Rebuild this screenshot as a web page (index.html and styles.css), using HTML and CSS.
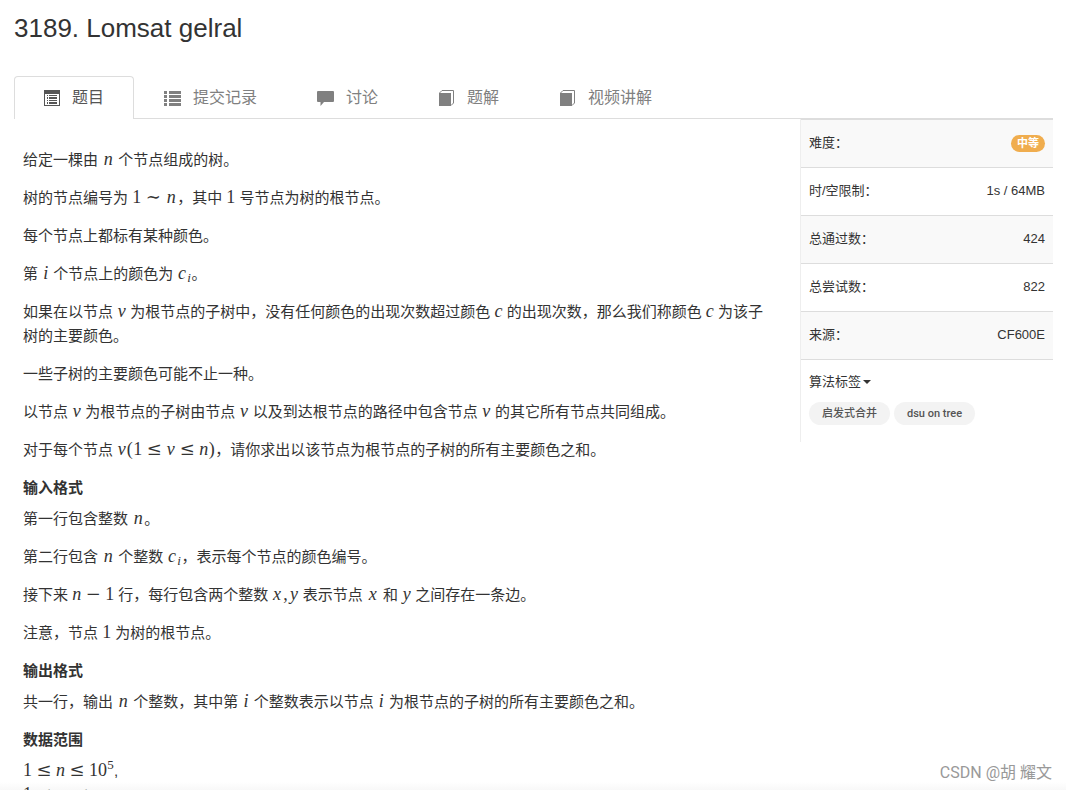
FILE: index.html
```html
<!DOCTYPE html>
<html lang="zh-CN">
<head>
<meta charset="utf-8">
<title>3189. Lomsat gelral</title>
<link rel="stylesheet" href="styles.css">
</head>
<body>
<div class="page">
  <h1 class="title">3189. Lomsat gelral</h1>
  <nav class="tabs">
    <a class="tab active" href="#"><svg class="icon" viewBox="0 0 16 17"><path fill-rule="evenodd" d="M0 1h16v16H0zM1 5h14v11H1z"/><path d="M3 6h1v1H3zM5 6h8v1H5zM3 8h1v2H3zM5 8h8v2H5zM3 11h1v1H3zM5 11h8v1H5zM3 13h1v2H3zM5 13h8v2H5z"/></svg>题目</a>
    <a class="tab" href="#"><svg class="icon" viewBox="0 0 17 17"><path d="M0 2h3v3H0zM5 2h12v3H5zM0 6h3v3H0zM5 6h12v3H5zM0 10h3v3H0zM5 10h12v3H5zM0 14h3v3H0zM5 14h12v3H5z"/></svg>提交记录</a>
    <a class="tab" href="#"><svg class="icon" viewBox="0 0 17 17"><path d="M1 2h15Q17 2 17 3v9Q17 13 16 13H7L3.500 17v-4H1Q0 13 0 12V3Q0 2 1 2z"/></svg>讨论</a>
    <a class="tab" href="#"><svg class="icon" viewBox="0 0 17 17"><path d="M1 4h12v13H1z"/><path d="M1.500 4L4 1.500h11.500V14l-2.500 2.500" fill="none" stroke="currentColor"/></svg>题解</a>
    <a class="tab" href="#"><svg class="icon" viewBox="0 0 17 17"><path d="M1 4h12v13H1z"/><path d="M1.500 4L4 1.500h11.500V14l-2.500 2.500" fill="none" stroke="currentColor"/></svg>视频讲解</a>
  </nav>
  <div class="columns">
    <main class="problem">
      <p>给定一棵由 <i class="w12">n</i> 个节点组成的树。</p>
      <p>树的节点编号为 <b class="w9">1</b><b class="rel">∼</b><i class="w12">n</i>，其中 <b class="w9">1</b> 号节点为树的根节点。</p>
      <p>每个节点上都标有某种颜色。</p>
      <p>第 <i class="w7">i</i> 个节点上的颜色为 <i class="w9">c</i><i class="sub">i</i>。</p>
      <p>如果在以节点 <i class="w9">v</i> 为根节点的子树中，没有任何颜色的出现次数超过颜色 <i class="w8">c</i> 的出现次数，那么我们称颜色 <i class="w8">c</i> 为该子树的主要颜色。</p>
      <p>一些子树的主要颜色可能不止一种。</p>
      <p>以节点 <i class="w9">v</i> 为根节点的子树由节点 <i class="w9">v</i> 以及到达根节点的路径中包含节点 <i class="w9">v</i> 的其它所有节点共同组成。</p>
      <p>对于每个节点 <i class="w9">v</i><b class="w7">(</b><b class="w9">1</b><b class="rel">≤</b><i class="w9">v</i><b class="rel">≤</b><i class="w9">n</i><b class="w7">)</b>，请你求出以该节点为根节点的子树的所有主要颜色之和。</p>
      <h4>输入格式</h4>
      <p>第一行包含整数 <i class="w12">n</i>。</p>
      <p>第二行包含 <i class="w12">n</i> 个整数 <i class="w9">c</i><i class="sub">i</i>，表示每个节点的颜色编号。</p>
      <p>接下来 <i class="w9">n</i><b class="rel">−</b><b class="w9">1</b> 行，每行包含两个整数 <i class="w9">x</i><b class="w8">,</b><i class="w9">y</i> 表示节点 <i class="w12">x</i> 和 <i class="w9">y</i> 之间存在一条边。</p>
      <p>注意，节点 <b class="w9">1</b> 为树的根节点。</p>
      <h4>输出格式</h4>
      <p>共一行，输出 <i class="w12">n</i> 个整数，其中第 <i class="w7">i</i> 个整数表示以节点 <i class="w7">i</i> 为根节点的子树的所有主要颜色之和。</p>
      <h4>数据范围</h4>
      <p><b class="w9">1</b><b class="rel">≤</b><i class="w9">n</i><b class="rel">≤</b><b class="w9">1</b><b class="w9">0</b><b class="sup">5</b>,<br><b class="w9">1</b><b class="rel">≤</b><i class="w8">c</i><i class="sub">i</i><b class="rel">≤</b><i class="w9">n</i></p>
    </main>
    <aside class="info">
      <table class="facts">
        <tr><th scope="row">难度：</th><td><span class="badge">中等</span></td></tr>
        <tr><th scope="row">时/空限制：</th><td>1s / 64MB</td></tr>
        <tr><th scope="row">总通过数：</th><td>424</td></tr>
        <tr><th scope="row">总尝试数：</th><td>822</td></tr>
        <tr><th scope="row">来源：</th><td>CF600E</td></tr>
      </table>
      <div class="labels">
        <button class="toggle" type="button">算法标签<span class="caret"></span></button>
        <div class="tags"><a class="tag" href="#">启发式合并</a><a class="tag" href="#">dsu on tree</a></div>
      </div>
    </aside>
  </div>
</div>
<div class="watermark">CSDN @胡 耀文</div>
</body>
</html>
```
FILE: styles.css
```css
* { box-sizing: border-box; }
body {
  margin: 0;
  height: 100vh;
  overflow: hidden;
  position: relative;
  background: linear-gradient(to top, #f8f8f8, #fff 8px);
  color: #333;
  font: 15px/24px "Liberation Sans", "Noto Sans CJK SC", sans-serif;
}
a { color: inherit; text-decoration: none; }
.page { padding: 12px 13px 0 14px; }
.title { margin: 0 0 32px; font-size: 26px; line-height: 32px; font-weight: 400; }
.tabs { display: flex; border-bottom: 1px solid #ddd; }
.tab {
  display: flex;
  align-items: center;
  gap: 12px;
  height: 42px;
  padding: 0 29px;
  border: 1px solid transparent;
  border-bottom: 0;
  color: #808080;
  font-size: 16px;
}
.tab.active {
  height: 43px;
  margin-bottom: -1px;
  padding-bottom: 1px;
  color: #555;
  background: #fff;
  border-color: #ddd;
  border-radius: 4px 4px 0 0;
}
.icon { height: 17px; fill: currentColor; }
.columns { display: grid; grid-template-columns: minmax(0, 1fr) 253px; align-items: start; }
.problem { padding: 29px 28px 0 9px; }
.problem p { margin: 0 0 14px; }
.problem h4 { margin: 0 0 7px; font-size: 15px; line-height: 24px; }

/* formula symbols */
.problem i, .problem b {
  display: inline-block;
  font-family: "Liberation Serif", serif;
  font-size: 18px;
  line-height: 20px;
  font-weight: 400;
  text-align: center;
}
.w7 { width: 7px; }
.w8 { width: 8px; }
.w9 { width: 9px; }
.w12 { width: 12px; }
.problem .rel { width: 24px; font-family: "DejaVu Serif", serif; font-size: 18px; }
.problem .sub, .problem .sup { font-size: 13px; line-height: 12px; }
.problem .sub { width: 5px; vertical-align: -3px; }
.problem .sup { width: 7px; vertical-align: 7px; }

.info { border-left: 1px solid #eee; font-size: 13px; }
.facts { width: 100%; border-collapse: separate; border-spacing: 0; }
.facts th, .facts td { height: 48px; padding: 0 8px 2px; border-bottom: 1px solid #ddd; font-weight: 400; text-align: left; }
.facts td { text-align: right; }
.facts tr:nth-child(odd) { background: #f9f9f9; }
.facts tr:first-child > * { height: 49px; border-top: 1px solid #ddd; }
.badge {
  display: inline-block;
  padding: 0 6px;
  border-radius: 9px;
  background: #f0ad4e;
  color: #fff;
  font-size: 11px;
  line-height: 17px;
  font-weight: 700;
}
.labels { padding: 10px 8px 17px; }
.toggle {
  display: flex;
  align-items: center;
  gap: 2px;
  padding: 0;
  border: 0;
  background: none;
  color: inherit;
  font: inherit;
}
.caret { border: 4px solid transparent; border-top-color: currentColor; border-bottom: 0; }
.tags { display: flex; gap: 4px; margin-top: 8px; }
.tag {
  padding: 0 13px;
  border-radius: 12px;
  background: #f3f3f3;
  color: #555;
  font: 500 11px/23px Roboto, "Noto Sans CJK SC", sans-serif;
}
.watermark {
  position: absolute;
  right: 14px;
  bottom: 5px;
  color: #999;
  font: 400 16px/24px Roboto, "Noto Sans CJK SC", sans-serif;
}
```
